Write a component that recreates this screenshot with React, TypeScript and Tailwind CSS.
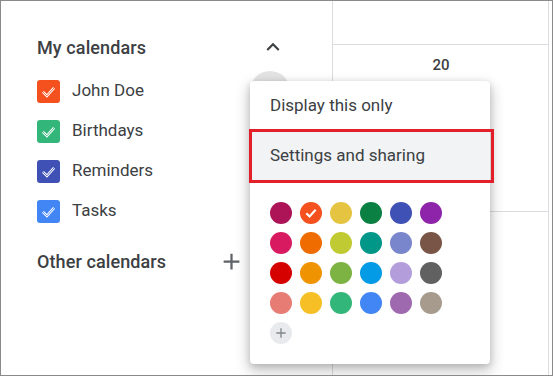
import React from 'react';

const calendars = [
	{ name: 'John Doe', color: '#f4511e' },
	{ name: 'Birthdays', color: '#33b679' },
	{ name: 'Reminders', color: '#3f51b5' },
	{ name: 'Tasks', color: '#4285f4' },
];

const palette = [
	['#ad1457', '#f4511e', '#e4c441', '#0b8043', '#3f51b5', '#8e24aa'],
	['#d81b60', '#ef6c00', '#c0ca33', '#009688', '#7986cb', '#795548'],
	['#d50000', '#f09300', '#7cb342', '#039be5', '#b39ddb', '#616161'],
	['#e67c73', '#f6bf26', '#33b679', '#4285f4', '#9e69af', '#a79b8e'],
];

const CheckBox: React.FC<{ color: string }> = ({ color }) => (
	<div className="w-[23px] h-[23px] rounded-[3px] flex items-center justify-center" style={{ backgroundColor: color }}>
		<svg width="19" height="19" viewBox="0 0 24 24" fill="none">
			<polyline points="5,12.5 10,17.5 19,7.5" stroke="#fff" strokeWidth="3.4" strokeLinejoin="miter" />
			<polyline points="5,12.5 10,17.5 19,7.5" stroke={color} strokeWidth="1.1" />
		</svg>
	</div>
);

const App: React.FC = () => {
	return (
		<div className="w-[553px] h-[376px] border border-[#8a8a8a] bg-white relative flex font-['Roboto',sans-serif] text-[#3c4043] overflow-hidden">
			{/* sidebar */}
			<div className="w-[331px] pl-[36px] pt-[26px]">
				<div className="flex items-center justify-between h-[40px] w-[249px]">
					<span className="text-[18px] font-medium tracking-[0.1px]">My calendars</span>
					<svg width="26" height="26" viewBox="0 0 24 24" fill="#3c4043">
						<path d="M12 8l-6 6 1.41 1.41L12 10.83l4.59 4.58L18 14z" />
					</svg>
				</div>
				<div className="mt-[4px] flex flex-col">
					{calendars.map((c) => (
						<div key={c.name} className="flex items-center h-[40px]">
							<CheckBox color={c.color} />
							<span className="ml-[12px] text-[17px]">{c.name}</span>
						</div>
					))}
				</div>
				<div className="mt-[10px] flex items-center justify-between h-[40px] w-[208px]">
					<span className="text-[18px] font-medium tracking-[0.1px]">Other calendars</span>
					<svg width="27" height="27" viewBox="0 0 24 24" fill="#5f6368">
						<path d="M19 13h-6v6h-2v-6H5v-2h6V5h2v6h6v2z" />
					</svg>
				</div>
			</div>

			{/* day grid */}
			<div className="w-[217px] h-full border-l border-r border-[#dadce0] flex flex-col">
				<div className="h-[44px] border-b border-[#dadce0]" />
				<div className="h-[167px] border-b border-[#dadce0] flex justify-center pt-[10px]">
					<span className="text-[15px] font-medium leading-[20px] pl-[1px]">20</span>
				</div>
				<div className="flex-1" />
			</div>

			{/* more button hover circle */}
			<div className="absolute left-[249px] top-[70px] w-[40px] h-[40px] rounded-full bg-[#e3e3e3]" />

			{/* menu */}
			<div className="absolute left-[249px] top-[80px] w-[240px] h-[283px] bg-white rounded-[4px] shadow-[0_6px_14px_2px_rgba(0,0,0,0.2),0_2px_6px_rgba(0,0,0,0.15)] flex flex-col">
				<div className="h-[50px] flex items-center pl-[20px] text-[17px]">Display this only</div>
				<div className="h-[50px] flex items-center pl-[20px] text-[17px] bg-[#f1f3f4]">Settings and sharing</div>
				<div className="pt-[21px] pl-[20px] grid grid-cols-[repeat(6,22px)] gap-[8px]">
					{palette.flat().map((col, i) => (
						<div key={i} className="w-[22px] h-[22px] rounded-full flex items-center justify-center" style={{ backgroundColor: col }}>
							{i === 1 && (
								<svg width="14" height="14" viewBox="0 0 24 24" fill="none">
									<polyline points="4,12.5 9.5,18 20,6.5" stroke="#fff" strokeWidth="3.6" />
								</svg>
							)}
						</div>
					))}
					<div className="w-[22px] h-[22px] rounded-full bg-[#e8eaed] flex items-center justify-center">
						<svg width="16" height="16" viewBox="0 0 24 24" fill="#80868b">
							<path d="M19 13h-6v6h-2v-6H5v-2h6V5h2v6h6v2z" />
						</svg>
					</div>
				</div>
			</div>

			{/* highlight box */}
			<div className="absolute left-[248px] top-[128px] w-[245px] h-[54px] border-[3px] border-[#e3202a]" />
		</div>
	);
};

export default App;
